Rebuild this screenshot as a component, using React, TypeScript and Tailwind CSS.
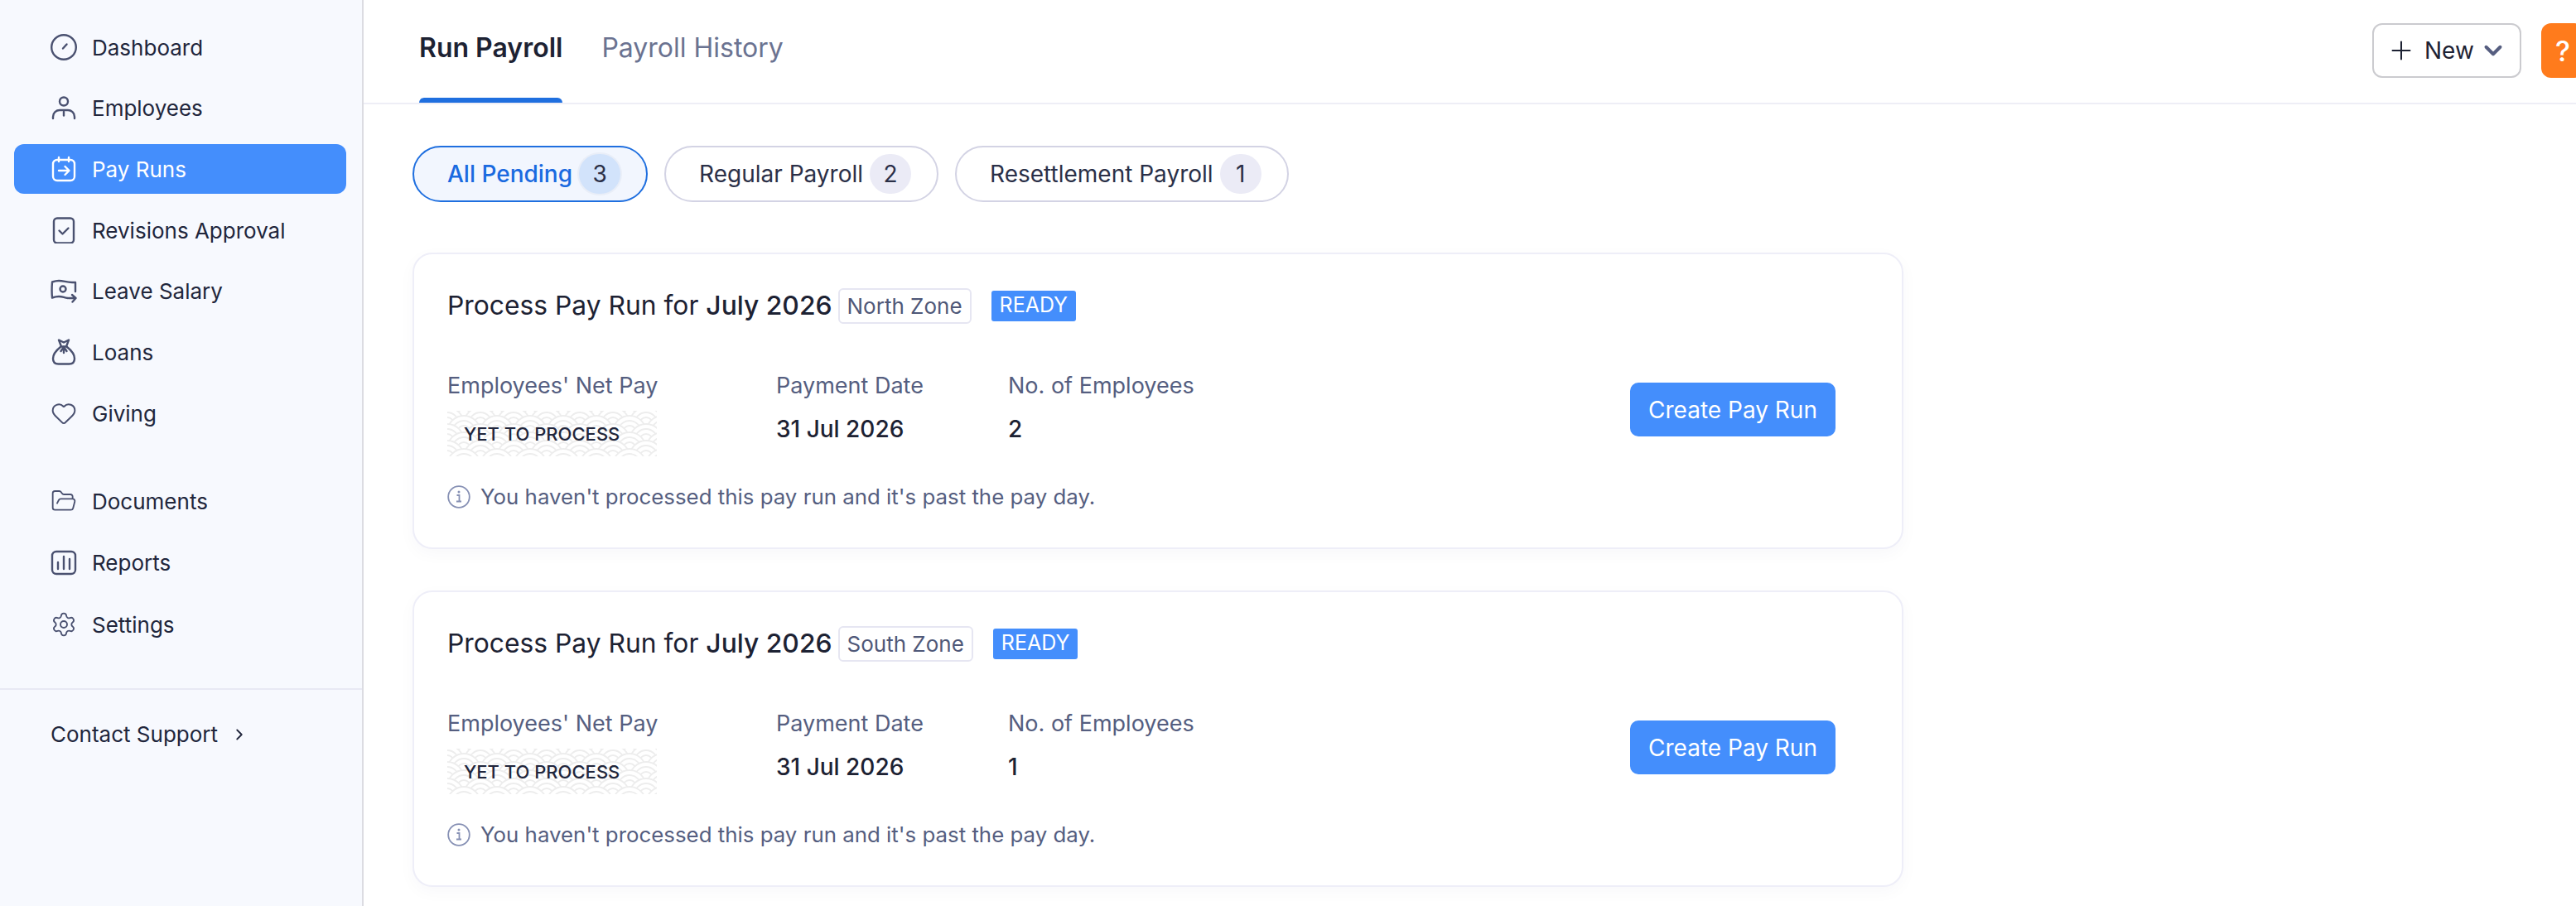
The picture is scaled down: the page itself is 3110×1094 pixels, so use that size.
import React from "react";
import { ChevronDown, ChevronRight, FolderOpen, Heart, Plus, Settings } from "lucide-react";

const iconProps = {
    width: 32,
    height: 32,
    viewBox: "0 0 32 32",
    fill: "none",
    stroke: "currentColor",
    strokeWidth: 2.4,
    strokeLinecap: "round" as const,
    strokeLinejoin: "round" as const,
};

const DashboardIcon = () => (
    <svg {...iconProps}>
        <circle cx="16" cy="16" r="14.8" />
        <path d="M15 17.5 L19.5 12.5" />
    </svg>
);

const EmployeesIcon = () => (
    <svg {...iconProps}>
        <circle cx="16" cy="7.5" r="5" />
        <path d="M3 28 v-2 c0-5 4-8 8-8 h10 c4 0 8 3 8 8 v2" />
        <path d="M16 20 v4.5" />
    </svg>
);

const PayRunsIcon = () => (
    <svg {...iconProps}>
        <rect x="3" y="5" width="26" height="25" rx="5" />
        <path d="M10 2 v5 M22 2 v5" />
        <path d="M10 18 h12 M17.5 13 l5 5 -5 5" />
    </svg>
);

const RevisionsIcon = () => (
    <svg {...iconProps}>
        <rect x="4" y="1.5" width="24" height="30" rx="4" />
        <path d="M10.5 16.5 l4 4 7-7" />
    </svg>
);

const LeaveSalaryIcon = () => (
    <svg {...iconProps}>
        <path d="M21 24 c-5-.5-6-2-11-2 -3 0-5 .5-8 1.5 -.5-5-.5-13 0-19 3-1 5-1.5 8-1.5 6 0 9 2 16 2 h4 v11" />
        <circle cx="15" cy="13" r="3.5" />
        <path d="M22 24 h8 M26 20 l4.5 4 -4 4.5" />
    </svg>
);

const LoansIcon = () => (
    <svg {...iconProps}>
        <path d="M10 1.5 l6 3 6-3 -3 8 h-6 z" />
        <path d="M12 10 c-5 4-9 9-9 14 0 4 2.5 6.5 6.5 6.5 h13 c4 0 6.5-2.5 6.5-6.5 0-5-4-10-9-14" />
        <path d="M16 10 v7 M12.5 15 l3.5-5 3.5 5" />
    </svg>
);

const ReportsIcon = () => (
    <svg {...iconProps}>
        <rect x="2" y="2" width="28" height="27" rx="5" />
        <path d="M9 15 v8 M16 8 v15 M23 11 v12" />
    </svg>
);

const InfoIcon = () => (
    <svg width="28" height="28" viewBox="0 0 28 28" fill="none" className="text-[#8690b4]">
        <circle cx="14" cy="14" r="12.8" stroke="currentColor" strokeWidth="1.8" />
        <path d="M11.5 12 h3 v7 M11 19.5 h6" stroke="currentColor" strokeWidth="1.8" />
        <circle cx="14" cy="8" r="1.5" fill="currentColor" />
    </svg>
);

// wave texture behind the "yet to process" amount
const WavePattern = () => {
    const circles = [];
    for (let row = 0; row < 9; row++) {
        for (let col = 0; col < 8; col++) {
            const cx = col * 40 + (row % 2 ? 20 : 0);
            const cy = row * 10 - 4;
            circles.push(
                <g key={row + "-" + col}>
                    <circle cx={cx} cy={cy} r="20" fill="#fff" stroke="#ededed" strokeWidth="1.8" />
                    <circle cx={cx} cy={cy} r="14" fill="#fff" stroke="#ededed" strokeWidth="1.8" />
                    <circle cx={cx} cy={cy} r="8" fill="#fff" stroke="#ededed" strokeWidth="1.8" />
                </g>
            );
        }
    }
    return (
        <svg className="absolute inset-0" width="253" height="55" viewBox="0 0 253 55">
            {circles}
        </svg>
    );
};

const mainNav = [
    { label: "Dashboard", icon: <DashboardIcon /> },
    { label: "Employees", icon: <EmployeesIcon /> },
    { label: "Pay Runs", icon: <PayRunsIcon />, active: true },
    { label: "Revisions Approval", icon: <RevisionsIcon /> },
    { label: "Leave Salary", icon: <LeaveSalaryIcon /> },
    { label: "Loans", icon: <LoansIcon /> },
    { label: "Giving", icon: <Heart size={36} strokeWidth={1.5} /> },
];

const lowerNav = [
    { label: "Documents", icon: <FolderOpen size={38} strokeWidth={1.4} /> },
    { label: "Reports", icon: <ReportsIcon /> },
    { label: "Settings", icon: <Settings size={38} strokeWidth={1.4} /> },
];

const filters = [
    { label: "All Pending", count: 3, active: true },
    { label: "Regular Payroll", count: 2 },
    { label: "Resettlement Payroll", count: 1 },
];

const payRuns = [
    { zone: "North Zone", employees: 2 },
    { zone: "South Zone", employees: 1 },
];

function NavItem({ label, icon, active }: { label: string; icon: React.ReactNode; active?: boolean }) {
    return (
        <div
            className={
                "flex items-center h-[60px] rounded-[12px] pl-[44px] text-[26px] " +
                (active ? "bg-[#448efc] text-white" : "text-[#21263c]")
            }
        >
            <span className={"w-[32px] h-[32px] flex items-center justify-center shrink-0 " + (active ? "text-white" : "text-[#4a5170]")}>
                {icon}
            </span>
            <span className="ml-[18px]">{label}</span>
        </div>
    );
}

function PayRunCard({ zone, employees }: { zone: string; employees: number }) {
    return (
        <div className="w-[1800px] h-[358px] bg-white border-2 border-[#eeeef8] rounded-[24px] shadow-[0_6px_20px_rgba(40,40,90,0.03)] pl-[40px] pr-[80px] pt-[40px]">
            <div className="flex items-center h-[44px]">
                <span className="text-[31.8px] text-[#1d2233]">
                    Process Pay Run for <span className="font-medium">July 2026</span>
                </span>
                <span className="ml-[7px] h-[43px] px-[9px] flex items-center border-2 border-[#e6e6f2] rounded-[6px] text-[26px] text-[#4f5878]">
                    {zone}
                </span>
                <span className="ml-[24px] h-[37px] px-[10px] flex items-center bg-[#448efc] rounded-[3px] text-[25px] text-white">
                    READY
                </span>
            </div>
            <div className="flex mt-[57px]">
                <div className="w-[397px]">
                    <div className="text-[27px] leading-[36px] text-[#555e80]">Employees' Net Pay</div>
                    <div className="relative w-[253px] h-[55px] mt-[12px] overflow-hidden">
                        <WavePattern />
                        <span className="absolute left-[20px] top-[11px] text-[22px] leading-[34px] font-medium text-[#21263c]">
                            YET TO PROCESS
                        </span>
                    </div>
                </div>
                <div className="w-[280px]">
                    <div className="text-[27px] leading-[36px] text-[#555e80]">Payment Date</div>
                    <div className="text-[28px] leading-[36px] mt-[16px] font-medium text-[#1d2233]">31 Jul 2026</div>
                </div>
                <div>
                    <div className="text-[27px] leading-[36px] text-[#555e80]">No. of Employees</div>
                    <div className="text-[28px] leading-[36px] mt-[16px] font-medium text-[#1d2233]">{employees}</div>
                </div>
                <button className="ml-auto self-start mt-[14px] w-[248px] h-[65px] rounded-[10px] bg-[#448efc] text-[28px] text-white">
                    Create Pay Run
                </button>
            </div>
            <div className="flex items-center mt-[31px] text-[25.85px] leading-[36px] text-[#555e80]">
                <InfoIcon />
                <span className="ml-[12px]">You haven't processed this pay run and it's past the pay day.</span>
            </div>
        </div>
    );
}

export default function App() {
    return (
        <div className="flex h-[1094px] w-[3110px] overflow-hidden bg-white font-['Inter',sans-serif]">
            {/* Sidebar */}
            <aside className="w-[439px] shrink-0 h-full bg-[#f7f9fe] border-r-2 border-[#dcdce2]">
                <div className="flex flex-col gap-[13.7px] pt-[27px] pl-[17px] pr-[19px]">
                    {mainNav.map(item => (
                        <NavItem key={item.label} {...item} />
                    ))}
                </div>
                <div className="flex flex-col gap-[14.5px] mt-[46px] pl-[17px] pr-[19px]">
                    {lowerNav.map(item => (
                        <NavItem key={item.label} {...item} />
                    ))}
                </div>
                <div className="mt-[47px] border-t-2 border-[#e8e9f4]" />
                <div className="flex items-center mt-[36px] pl-[61px] text-[26px] leading-[36px] text-[#21263c]">
                    Contact Support
                    <ChevronRight size={22} strokeWidth={2} className="ml-[15px]" />
                </div>
            </aside>

            {/* Main */}
            <main className="flex-1 min-w-0">
                <header className="flex items-start justify-between h-[126px] border-b-2 border-[#eeeef6] pl-[67px]">
                    <div className="flex gap-[47px]">
                        <div className="h-[124px] relative pt-[38px] text-[32px] leading-[40px] font-semibold text-[#1d2233]">
                            Run Payroll
                            <div className="absolute bottom-0 left-0 right-0 h-[6px] rounded-t-[6px] bg-[#1f6fdf]" />
                        </div>
                        <div className="pt-[38px] text-[32px] leading-[40px] text-[#6b7391]">Payroll History</div>
                    </div>
                    <div className="flex items-center gap-[24px] pt-[28px] -mr-[10px] shrink-0">
                        <button className="flex items-center w-[180px] h-[66px] border-2 border-[#cbcbcf] rounded-[12px] pl-[15px] text-[28px] text-[#1d2233]">
                            <Plus size={36} strokeWidth={1.35} />
                            <span className="ml-[10px]">New</span>
                            <ChevronDown size={34} strokeWidth={2.8} className="ml-[6px] text-[#565e80]" />
                        </button>
                        <div className="w-[52px] h-[66px] rounded-[12px] bg-[#ff7b1c] flex items-center justify-center text-[34px] font-medium text-white">
                            ?
                        </div>
                    </div>
                </header>

                <div className="pl-[59px]">
                    <div className="flex gap-[20px] mt-[50px]">
                        {filters.map(f => (
                            <div
                                key={f.label}
                                className={
                                    "flex items-center h-[68px] rounded-full border-2 pl-[40px] pr-[31px] text-[28px] " +
                                    (f.active
                                        ? "border-[#1f6fdf] bg-[#f2f6fe] text-[#1a6ae0] font-medium"
                                        : "border-[#d3d3e4] text-[#2b3048]")
                                }
                            >
                                {f.label}
                                <span
                                    className={
                                        "ml-[8px] w-[50px] h-[48px] rounded-full flex items-center justify-center " +
                                        (f.active ? "bg-[#d2e3fb] text-[#2b3048] font-normal ring-2 ring-[#e9eef8]" : "bg-[#ebebf6]")
                                    }
                                >
                                    {f.count}
                                </span>
                            </div>
                        ))}
                    </div>
                    <div className="flex flex-col gap-[50px] mt-[61px]">
                        {payRuns.map(run => (
                            <PayRunCard key={run.zone} zone={run.zone} employees={run.employees} />
                        ))}
                    </div>
                </div>
            </main>
        </div>
    );
}
